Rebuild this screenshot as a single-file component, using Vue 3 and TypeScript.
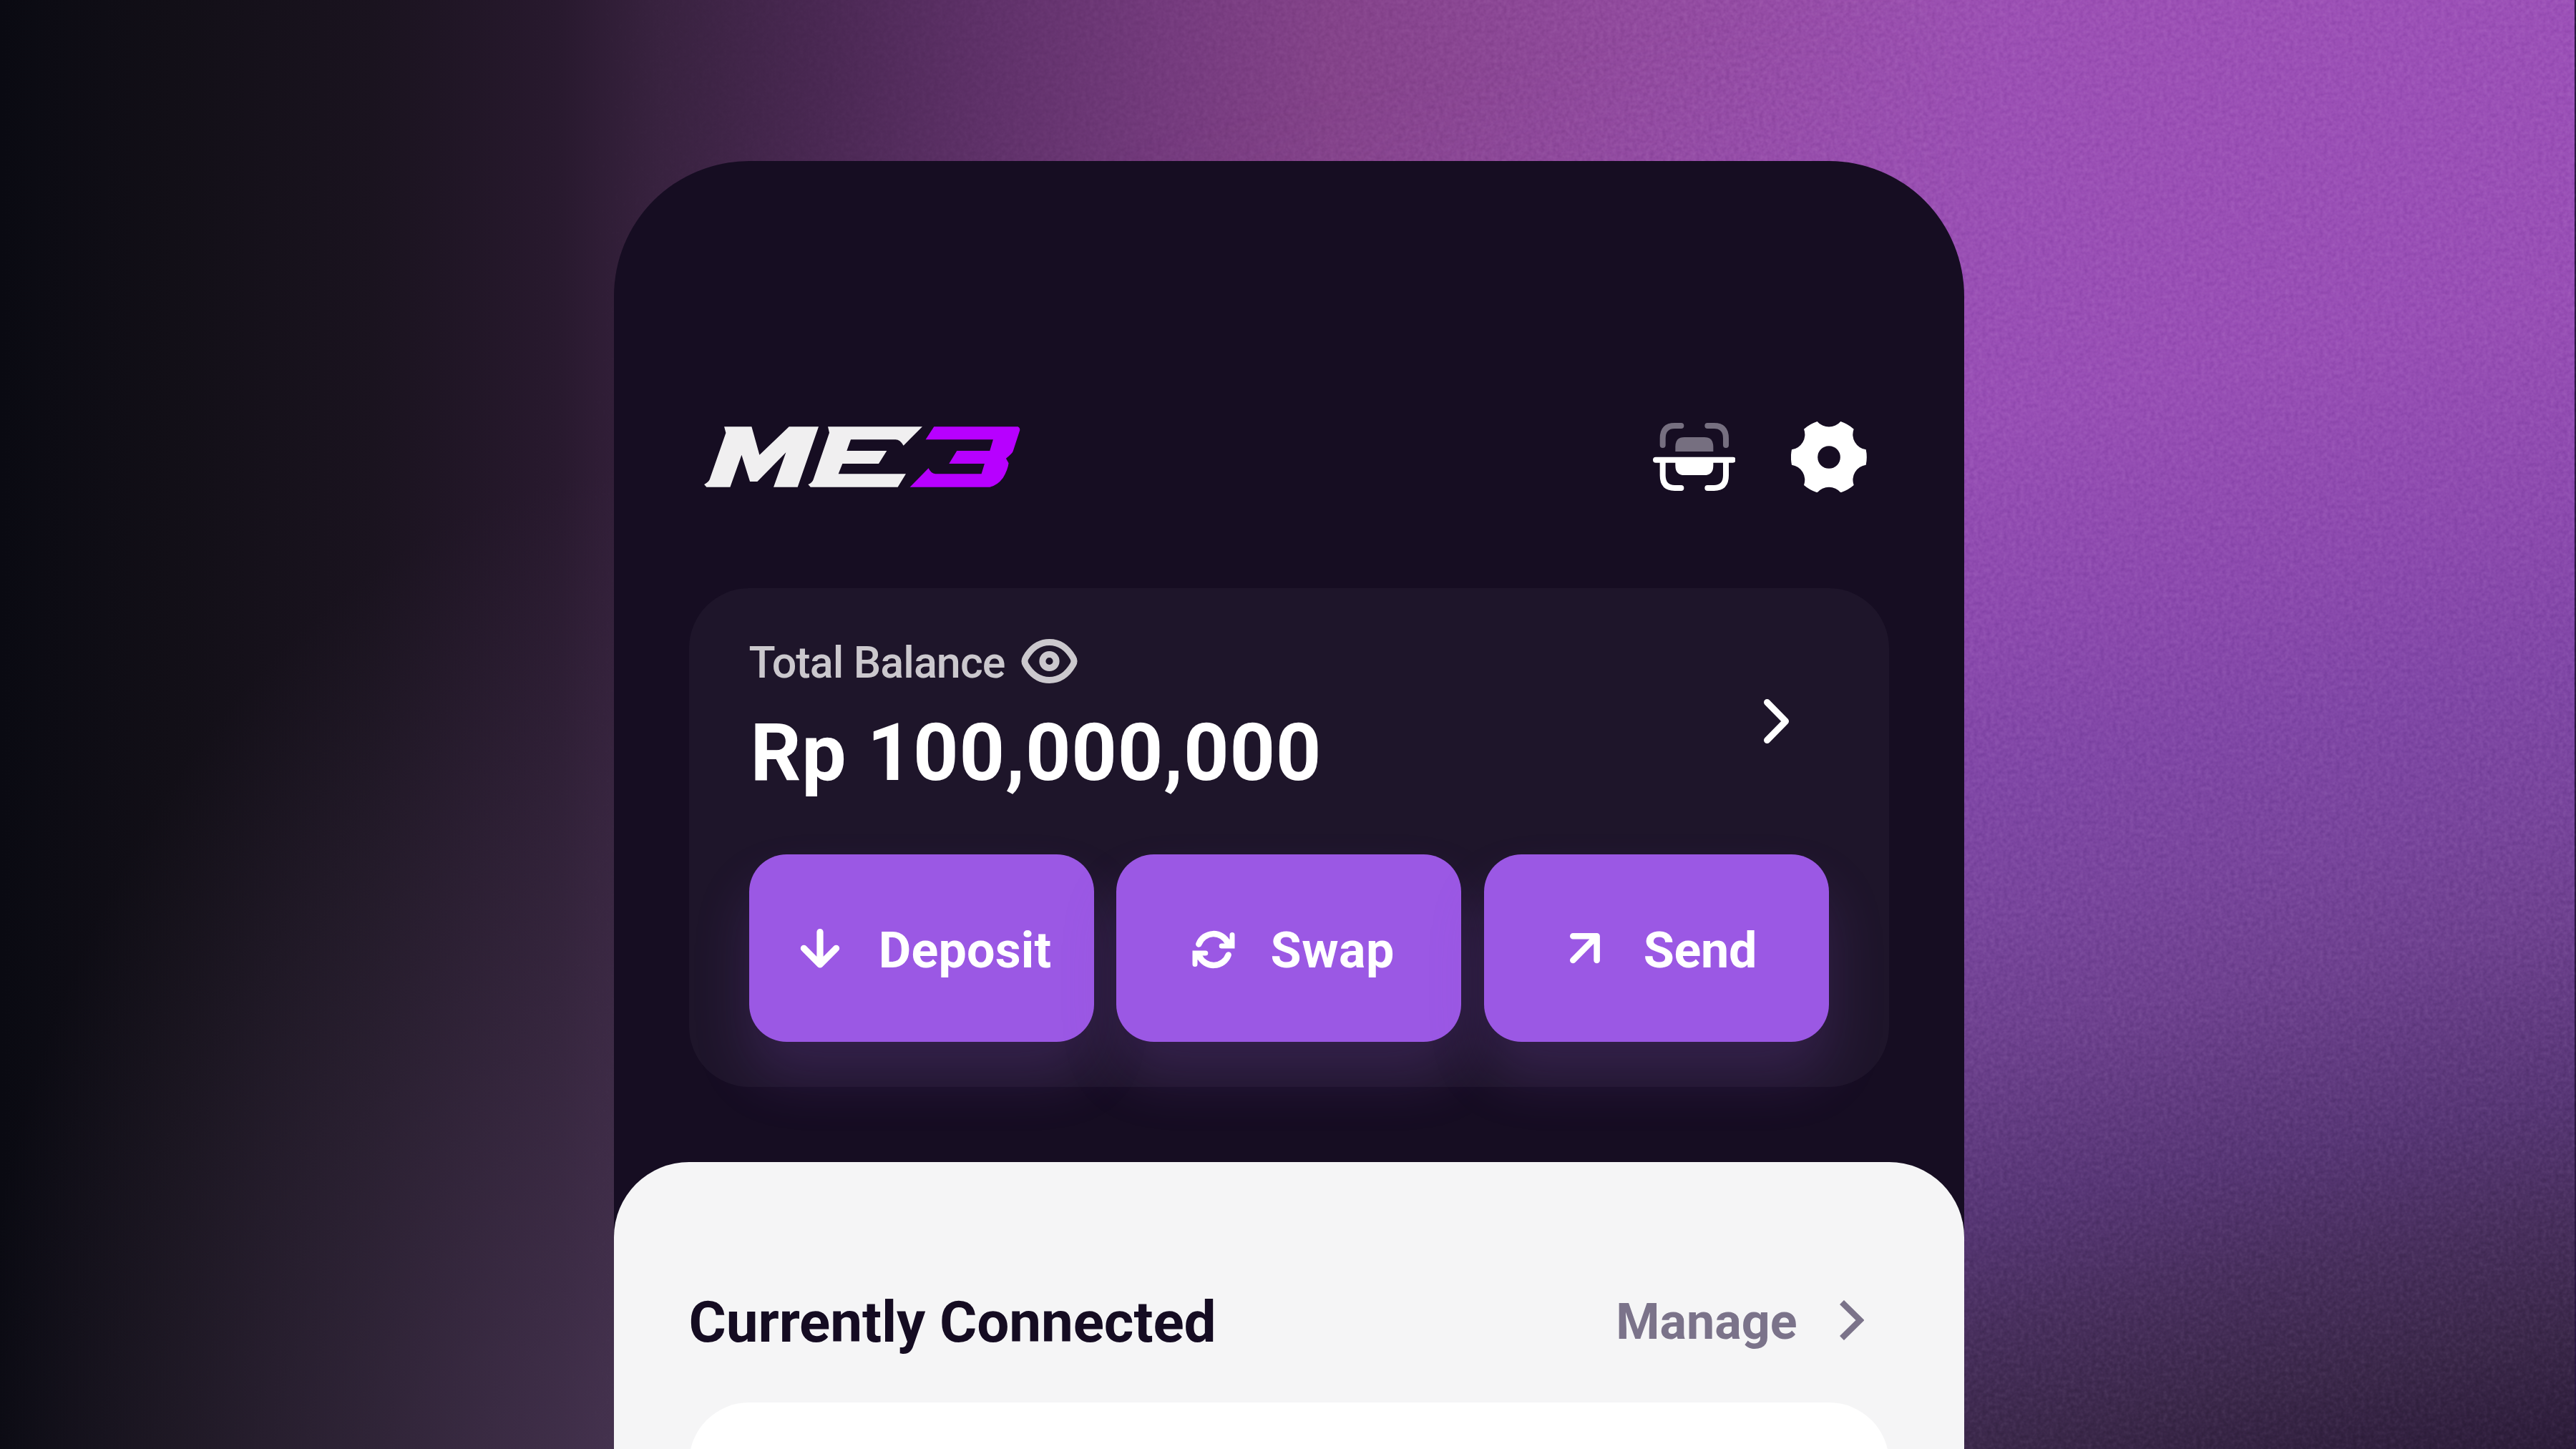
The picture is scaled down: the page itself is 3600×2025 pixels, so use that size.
<script setup lang="ts">
interface Action {
  id: 'deposit' | 'swap' | 'send'
  label: string
}

const balance = 'Rp 100,000,000'

const actions: Action[] = [
  { id: 'deposit', label: 'Deposit' },
  { id: 'swap', label: 'Swap' },
  { id: 'send', label: 'Send' },
]
</script>

<template>
  <main class="stage">
    <div class="glow-left"></div>
    <div class="shade-right"></div>
    <svg class="grain" width="3600" height="2025" aria-hidden="true">
      <filter id="grain" x="0" y="0" width="100%" height="100%" color-interpolation-filters="sRGB">
        <feTurbulence type="fractalNoise" baseFrequency="0.17" numOctaves="2" seed="4" />
        <feColorMatrix values="1 0 0 0 0  1 0 0 0 0  1 0 0 0 0  0 0 0 0 1" />
      </filter>
      <rect width="3600" height="2025" filter="url(#grain)" />
    </svg>

    <section class="phone">
      <header class="header">
        <svg class="logo" viewBox="72 78 1326 256" role="img" aria-label="ME3">
          <path
            fill="#f0eff0"
            d="M156 79H271L304 197L428 79H552L464 332H363L415 187L295 309H264L229 197L181 332H82L72 321Q91 311 95 300L163 105Z"
          />
          <path
            fill="#f0eff0"
            d="M591 79H987L908 158Q893 133 875 133H687L670 180H838L804 234H652L635 277H918L884 332H518L508 321Q526 314 530 300L597 104Z"
          />
          <path
            fill="#b700ff"
            d="M1036 79H1388Q1397 84 1396 94L1368 180Q1366 190 1338 212L1349 232Q1345 262 1325 294Q1302 325 1270 332H935L1013 253Q1022 274 1042 277H1235L1248 234H1099L1132 180H1270L1284 133H1001Z"
          />
        </svg>
        <nav class="tools">
          <svg class="scan" viewBox="89 93 347 285" fill="none" stroke-width="24" stroke-linecap="round">
            <g stroke="#766f80">
              <path d="M130 186V158Q130 105 180 105H207M318 105H345Q395 105 395 158V186" />
              <path fill="#766f80" stroke="none" d="M183 213V193Q183 153 221 153H304Q342 153 342 193V213Z" />
            </g>
            <g stroke="#fff">
              <path d="M101 248H424M130 248V313Q130 366 180 366H207M395 248V313Q395 366 345 366H318" />
              <path fill="#fff" stroke="none" d="M183 248H342V272Q342 312 304 312H221Q183 312 183 272Z" />
            </g>
          </svg>
          <svg class="gear" viewBox="670 86 317 299">
            <path
              fill="#fff"
              fill-rule="evenodd"
              d="M780 86A64 64 0 0 0 878 86A158 158 0 0 1 933 118A64 64 0 0 0 984 204A158 158 0 0 1 984 268A64 64 0 0 0 933 353A158 158 0 0 1 878 384A64 64 0 0 0 780 384A158 158 0 0 1 724 353A64 64 0 0 0 673 268A158 158 0 0 1 673 204A64 64 0 0 0 724 118A158 158 0 0 1 780 86ZM829 188.500a47.500 47.500 0 1 0 0 95a47.500 47.500 0 1 0 0-95Z"
            />
          </svg>
        </nav>
      </header>

      <section class="balance">
        <div class="summary">
          <div>
            <div class="caption">
              <span>Total Balance</span>
              <svg class="eye" viewBox="0 0 79 62" fill="none" stroke="#cbc8cd">
                <path
                  stroke-width="9"
                  stroke-linejoin="round"
                  d="M6.500 36Q3.500 31 6.500 26Q19 4.500 39.500 4.500Q60 4.500 72.500 26Q75.500 31 72.500 36Q60 57.500 39.500 57.500Q19 57.500 6.500 36Z"
                />
                <circle cx="39.500" cy="31" r="9.600" stroke-width="9" />
              </svg>
            </div>
            <div class="amount">{{ balance }}</div>
          </div>
          <svg class="open" viewBox="0 0 35 62" fill="none" stroke="#fff" stroke-width="9" stroke-linecap="round" stroke-linejoin="round">
            <path d="M4.500 4.500L30.500 31L4.500 57.500" />
          </svg>
        </div>

        <div class="actions">
          <button v-for="action in actions" :key="action.id" class="action" :class="action.id" type="button">
            <svg class="glyph" viewBox="0 0 84 84" fill="none" stroke="#fff" stroke-linecap="round">
              <path
                v-if="action.id === 'deposit'"
                stroke-width="9.200"
                stroke-linejoin="round"
                d="M42 19.600V65M19.400 42.300L42 65L64.600 42.300"
              />
              <template v-else-if="action.id === 'swap'">
                <g v-for="angle in [0, 180]" :key="angle" :transform="`rotate(${angle} 42 44)`">
                  <path stroke-width="8.400" d="M21.300 36.500A22 22 0 0 1 62 35" />
                  <path stroke-width="7" d="M68 23.600V39H53.200" />
                  <path fill="#fff" stroke="none" d="M68 26L56 39H68Z" />
                </g>
              </template>
              <path
                v-else
                stroke-width="8.600"
                stroke-linejoin="round"
                d="M25.300 25.300H58.600V59M58.600 25.300L25.300 59"
              />
            </svg>
            <span class="label">{{ action.label }}</span>
          </button>
        </div>
      </section>

      <section class="sheet">
        <div class="sheet-head">
          <h2>Currently Connected</h2>
          <a class="manage">
            <span>Manage</span>
            <svg viewBox="0 0 34.500 56" fill="none" stroke="#7b738a" stroke-width="8.500">
              <path d="M3 3L28.500 28L3 53" />
            </svg>
          </a>
        </div>
        <div class="list"></div>
      </section>
    </section>
  </main>
</template>

<style>
body {
  margin: 0;
  overflow: hidden;
}
</style>

<style scoped>
.stage {
  position: relative;
  box-sizing: border-box;
  width: 3600px;
  height: 2025px;
  overflow: hidden;
  padding: 224.5px 0 0 858px;
  font-family: Roboto, 'Noto Sans', sans-serif;
  background: linear-gradient(
    90deg,
    #0a0a12 0,
    #120f17 240px,
    #1a131f 520px,
    #28192e 780px,
    #38223f 920px,
    #4a2853 1150px,
    #5f3169 1380px,
    #753b7e 1640px,
    #84438a 1860px,
    #924b9f 2300px,
    #9d51b4 2800px,
    #9e52b9 3600px
  );
}

.glow-left,
.shade-right,
.grain {
  position: absolute;
  inset: 0;
}

.glow-left {
  background: radial-gradient(1000px 1500px at 950px 2150px, rgba(80, 62, 92, 0.7), rgba(80, 62, 92, 0));
}

.shade-right {
  border-right: 2px solid #2c1742;
  background: linear-gradient(
    169deg,
    rgba(152, 79, 181, 0) 18%,
    #984fb5 41%,
    #8c4aae 52%,
    #8047a6 60%,
    #78459c 67%,
    #6e418f 73%,
    #573675 82%,
    #482f5d 88%,
    #3b284a 94%,
    #2c1c39 100%
  );
  mask-image: linear-gradient(90deg, transparent 1500px, #000 2740px);
}

.grain {
  mix-blend-mode: soft-light;
  opacity: 0.22;
  mask-image: linear-gradient(90deg, transparent 700px, #000 2400px);
}

.phone {
  position: relative;
  display: flex;
  flex-direction: column;
  box-sizing: border-box;
  width: 1886.500px;
  height: 1800.500px;
  padding-top: 366.500px;
  overflow: hidden;
  border-radius: 189px 189px 0 0;
  background: #160d22;
}

.header {
  display: flex;
  flex: none;
  align-items: center;
  justify-content: space-between;
  height: 95px;
  margin: 0 135.500px 136px 126px;
}

.logo {
  width: 442px;
  height: 85.300px;
}

.tools {
  display: flex;
  align-items: center;
  gap: 78px;
}

.scan {
  width: 115.700px;
  height: 95px;
}

.gear {
  width: 105.700px;
  height: 99.700px;
}

.balance {
  flex: none;
  box-sizing: border-box;
  height: 697px;
  margin: 0 104.500px;
  padding: 68px 84px 0;
  border-radius: 84px;
  background: #1e152a;
}

.summary {
  display: flex;
  justify-content: space-between;
  height: 304px;
}

.caption {
  display: flex;
  align-items: center;
  gap: 22px;
  height: 72px;
  color: #cbc8cd;
  font-size: 61px;
  font-weight: 500;
  line-height: 72px;
  letter-spacing: -0.9px;
}

.eye {
  width: 79px;
  height: 62px;
  margin-top: -4px;
}

.amount {
  margin: 25px 0 0 2px;
  color: #fff;
  font-size: 111px;
  font-weight: 700;
  line-height: 130px;
  letter-spacing: 0.7px;
}

.open {
  width: 35px;
  height: 62px;
  margin: 87px 56px 0 0;
}

.actions {
  display: flex;
  gap: 31.500px;
}

.action {
  display: flex;
  flex: 1;
  align-items: center;
  justify-content: center;
  gap: 42px;
  height: 262px;
  padding: 0;
  border: 0;
  border-radius: 52.400px;
  background: #9b58e4;
  box-shadow: 0 48px 80px rgba(155, 88, 228, 0.18);
  color: #fff;
  font: 700 70px/82px Roboto, 'Noto Sans', sans-serif;
}

.glyph {
  width: 84px;
  height: 84px;
}

.label {
  margin: 0 2px 0 -2px;
  padding-top: 6px;
}

.deposit .label {
  letter-spacing: 0.2px;
}

.swap .label {
  letter-spacing: 0.5px;
}

.send .label {
  letter-spacing: -0.3px;
}

.swap .glyph {
  margin: 0 -2.500px 0 2.500px;
}

.sheet {
  position: relative;
  flex: 1;
  box-sizing: border-box;
  min-height: 0;
  margin-top: 105px;
  padding: 177px 104.500px 0;
  border-radius: 105px 105px 0 0;
  background: #f5f5f6;
}

.sheet-head {
  display: flex;
  align-items: center;
  justify-content: space-between;
  height: 94px;
}

h2 {
  margin: 0;
  color: #150c22;
  font-size: 80px;
  font-weight: 700;
  line-height: 94px;
  letter-spacing: -0.1px;
}

.manage {
  display: flex;
  align-items: center;
  gap: 59px;
  margin-right: 35px;
  color: #7b738a;
  font-size: 70px;
  font-weight: 700;
  line-height: 82px;
}

.manage span {
  margin-top: -2px;
}

.manage svg {
  width: 34.500px;
  height: 56px;
  margin-top: -7px;
}

.list {
  height: 200px;
  margin-top: 65px;
  border-radius: 84px 84px 0 0;
  background: #fff;
}
</style>
